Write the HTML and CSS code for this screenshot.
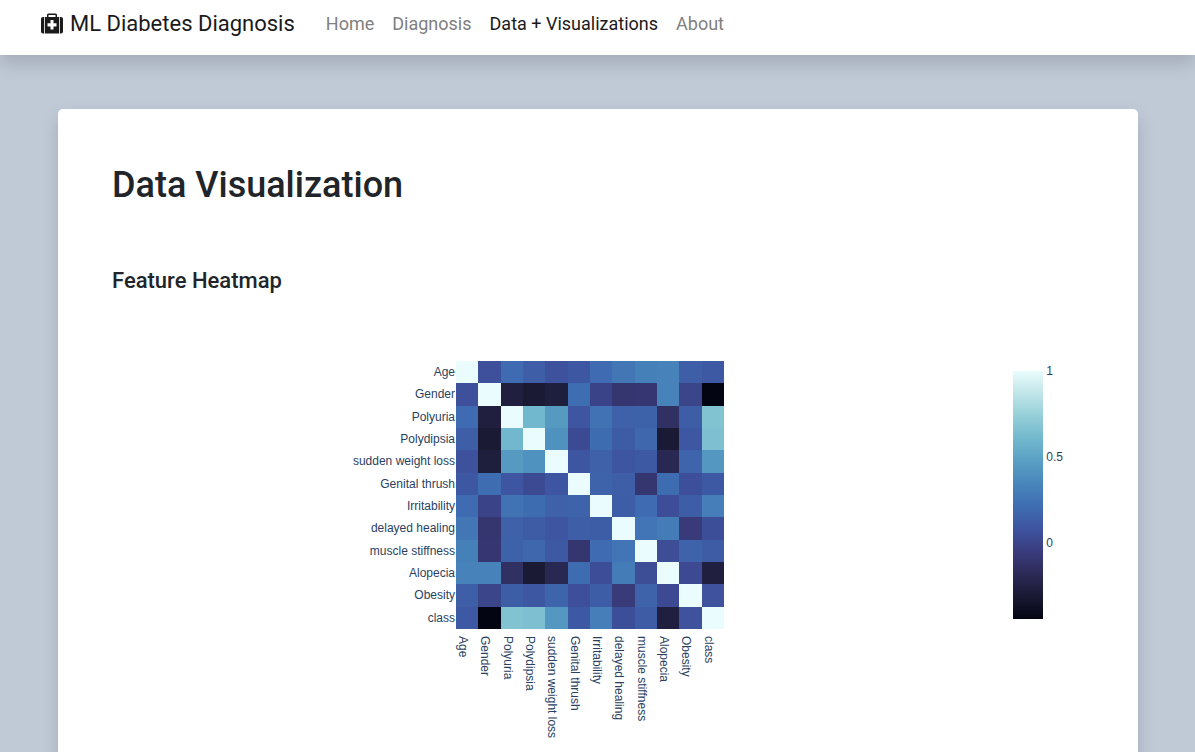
FILE: index.html
```html
<!DOCTYPE html>
<html lang="en">
<head>
<meta charset="utf-8">
<meta name="viewport" content="width=device-width, initial-scale=1">
<title>ML Diabetes Diagnosis</title>
<link rel="stylesheet" href="styles.css">
</head>
<body>
<nav class="navbar">
  <a class="brand" href="#">
    <svg class="brand-icon" viewBox="0 0 24 24" aria-hidden="true">
      <path d="M3 5H4V21.5H3Q1 21.500 1 19.500V7Q1 5 3 5ZM20 5H21Q23 5 23 7V19.500Q23 21.500 21 21.500H20ZM4.800 5H7V3Q7 1.500 8.500 1.500H15.500Q17 1.500 17 3V5H19.200V21.500H4.800ZM8.500 5H15.500V3H8.500ZM10.500 8V11.200H7.500V14.500H10.500V17.500H13.500V14.500H16.500V11.200H13.500V8Z" fill="currentColor" fill-rule="evenodd"/>
    </svg>
    <span>ML Diabetes Diagnosis</span>
  </a>
  <div class="nav-links">
    <a class="nav-link" href="#">Home</a>
    <a class="nav-link" href="#">Diagnosis</a>
    <a class="nav-link active" href="#" aria-current="page">Data + Visualizations</a>
    <a class="nav-link" href="#">About</a>
  </div>
</nav>
<main class="card">
  <h1>Data Visualization</h1>
  <h2>Feature Heatmap</h2>
  <div class="chart">
    <div class="plot">
      <div class="row-labels">
        <span>Age</span><span>Gender</span><span>Polyuria</span><span>Polydipsia</span><span>sudden weight loss</span><span>Genital thrush</span><span>Irritability</span><span>delayed healing</span><span>muscle stiffness</span><span>Alopecia</span><span>Obesity</span><span>class</span>
      </div>
      <div class="cells" id="cells" role="img" aria-label="Feature correlation heatmap"></div>
      <div class="column-labels">
        <span>Age</span><span>Gender</span><span>Polyuria</span><span>Polydipsia</span><span>sudden weight loss</span><span>Genital thrush</span><span>Irritability</span><span>delayed healing</span><span>muscle stiffness</span><span>Alopecia</span><span>Obesity</span><span>class</span>
      </div>
    </div>
    <div class="legend">
      <div class="scale"></div>
      <div class="ticks"><span>1</span><span>0.5</span><span>0</span></div>
    </div>
  </div>
</main>
<script src="heatmap.js"></script>
</body>
</html>
```
FILE: styles.css
```css
* { box-sizing: border-box; }
body {
  margin: 0;
  background: #c0cad7;
  color: #212529;
  font: 400 18px/27px Roboto, sans-serif;
}
.navbar {
  position: relative;
  display: flex;
  align-items: center;
  height: 55px;
  padding: 0 40px 8px;
  background: #fff;
  box-shadow: 0 9px 18px rgba(0, 0, 0, .15);
}
.brand {
  display: flex;
  align-items: center;
  gap: 6px;
  margin-right: 22px;
  color: #1a1a1a;
  font-size: 22px;
  text-decoration: none;
  white-space: nowrap;
}
.brand-icon { width: 24px; height: 24px; }
.nav-links { display: flex; }
.nav-link {
  padding: 0 9px;
  color: #808080;
  text-decoration: none;
  white-space: nowrap;
}
.nav-link.active { color: #1a1a1a; }
.card {
  margin: 54px 57px 54px 58px;
  padding: 54px;
  background: #fff;
  border-radius: 5px;
  box-shadow: 0 9px 18px rgba(0, 0, 0, .15);
}
h1, h2 { margin: 0; font-weight: 500; }
h1 { font-size: 36px; line-height: 45px; }
h2 { margin-top: 59px; font-size: 22px; line-height: 28px; }
.chart {
  display: flex;
  justify-content: space-between;
  padding: 66px 21px 0 224px;
  color: #2a3f5f;
  font: 12px/14px "Liberation Sans", Arial, sans-serif;
}
.plot {
  display: grid;
  grid-template-columns: 119px 268px;
  grid-template-rows: 268px auto;
  column-gap: 1px;
  row-gap: 7px;
}
.row-labels {
  display: grid;
  grid-template-rows: repeat(12, 1fr);
  align-items: center;
  justify-items: end;
  white-space: nowrap;
}
.cells {
  display: grid;
  grid-template-columns: repeat(12, 1fr);
  grid-template-rows: repeat(12, 1fr);
}
.column-labels {
  grid-column: 2;
  display: grid;
  grid-template-columns: repeat(12, 1fr);
  white-space: nowrap;
}
.column-labels span {
  writing-mode: vertical-rl;
  justify-self: start;
}
.legend {
  display: flex;
  gap: 3px;
  padding-top: 10px;
}
.scale {
  width: 30px;
  height: 248px;
  background: linear-gradient(to top, rgb(3, 5, 18), rgb(25, 25, 51), rgb(44, 42, 87), rgb(58, 60, 125), rgb(62, 83, 160), rgb(62, 109, 178), rgb(72, 134, 187), rgb(89, 159, 196), rgb(114, 184, 205), rgb(149, 207, 216), rgb(192, 229, 232), rgb(234, 252, 253));
}
.ticks {
  display: flex;
  flex-direction: column;
  gap: 72px;
  margin-top: -7px;
}
```
FILE: heatmap.js
```js
const correlations = [
  [1],
  [0.063, 1],
  [0.200, -0.269, 1],
  [0.137, -0.312, 0.599, 1],
  [0.065, -0.282, 0.447, 0.406, 1],
  [0.097, 0.209, 0.087, 0.028, 0.090, 1],
  [0.202, -0.014, 0.238, 0.203, 0.147, 0.160, 1],
  [0.258, -0.102, 0.150, 0.116, 0.088, 0.136, 0.127, 1],
  [0.308, -0.091, 0.153, 0.181, 0.109, -0.100, 0.202, 0.250, 1],
  [0.322, 0.328, -0.144, -0.311, -0.203, 0.205, 0.044, 0.290, 0.041, 1],
  [0.140, -0.005, 0.127, 0.099, 0.169, 0.054, 0.128, -0.066, 0.159, 0.029, 1],
  [0.109, -0.449, 0.666, 0.649, 0.437, 0.110, 0.299, 0.047, 0.123, -0.268, 0.072, 1]
];
const ice = [[3,5,18],[25,25,51],[44,42,87],[58,60,125],[62,83,160],[62,109,178],[72,134,187],[89,159,196],[114,184,205],[149,207,216],[192,229,232],[234,252,253]];
const minimum = -0.449;

function colorFor(value) {
  const position = (value - minimum) / (1 - minimum) * (ice.length - 1);
  const index = Math.min(Math.floor(position), ice.length - 2);
  const mix = position - index;
  const channels = ice[index].map((c, i) => Math.round(c + (ice[index + 1][i] - c) * mix));
  return `rgb(${channels.join(",")})`;
}

const cells = document.getElementById("cells");
for (let row = 0; row < 12; row++) {
  for (let column = 0; column < 12; column++) {
    const value = correlations[Math.max(row, column)][Math.min(row, column)];
    const cell = document.createElement("div");
    cell.style.backgroundColor = colorFor(value);
    cells.append(cell);
  }
}
```
